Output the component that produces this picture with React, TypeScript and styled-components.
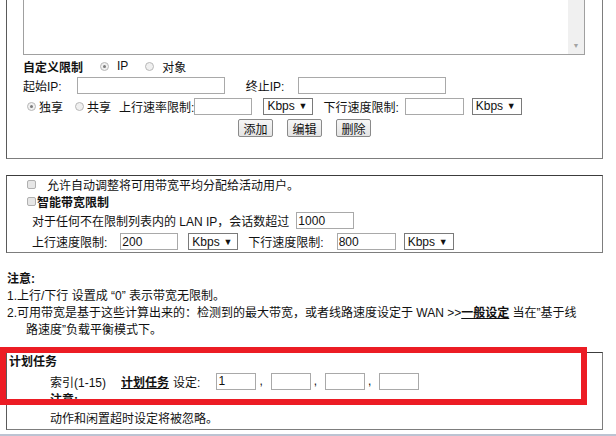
import React, { FC } from "react";
import styled, { createGlobalStyle } from "styled-components";

const GlobalStyle = createGlobalStyle`
  body {
    margin: 0;
    background: #fff;
    color: #111;
    font-family: "Liberation Sans", "Noto Sans CJK SC", sans-serif;
    font-size: 12px;
  }
`;

const Root = styled.div`
  position: relative;
  display: flow-root;
  height: 436px;
  overflow: hidden;
`;

const Page = styled.div`
  padding: 0 13px 0 6px;
`;

const Panel = styled.div<{ $top: number; $pad: string }>`
  margin-top: ${(p) => p.$top}px;
  padding: ${(p) => p.$pad};
  border: 1px solid #7d7d7d;
  border-top-color: #3c3c3c;
  border-left-color: #5a5a5a;
`;

const TextBox = styled.div`
  display: flex;
  box-sizing: border-box;
  width: 562px;
  height: 84px;
  border: 1px solid #a0a0a0;
`;

const TextArea = styled.textarea`
  flex: 1;
  border: none;
  resize: none;
  outline: none;
  margin: 0;
  padding: 2px;
`;

const ScrollTrack = styled.div`
  display: flex;
  flex-direction: column;
  justify-content: flex-end;
  align-items: center;
  width: 16px;
  background: #f0f0f0;
  color: #a3a3a3;
  font-size: 7px;
  line-height: 16px;
`;

const Row = styled.div<{ $h: number; $mt?: number; $indent?: number }>`
  display: flex;
  align-items: center;
  height: ${(p) => p.$h}px;
  margin-top: ${(p) => p.$mt || 0}px;
  padding-left: ${(p) => p.$indent || 0}px;
  white-space: nowrap;
`;

const Bold = styled.span`
  font-weight: bold;
`;

const Gap = styled.span<{ $w: number }>`
  display: inline-block;
  width: ${(p) => p.$w}px;
  flex: none;
`;

const Radio = styled.span<{ $checked?: boolean }>`
  display: inline-flex;
  align-items: center;
  justify-content: center;
  box-sizing: border-box;
  width: 9px;
  height: 9px;
  border-radius: 50%;
  border: 1px solid #b8b8b8;
  background: #f0f0f0;
  flex: none;
  &::after {
    content: "";
    display: ${(p) => (p.$checked ? "block" : "none")};
    width: 3px;
    height: 3px;
    border-radius: 50%;
    background: #7c7c7c;
  }
`;

const Check = styled.span`
  display: inline-block;
  box-sizing: border-box;
  width: 9px;
  height: 9px;
  border: 1px solid #b0b0b0;
  border-radius: 2px;
  background: #e6e6e6;
  flex: none;
`;

const Input = styled.input<{ $w: number }>`
  box-sizing: border-box;
  width: ${(p) => p.$w}px;
  height: 17px;
  border: 1px solid #a9a9a9;
  padding: 0 1px;
  margin: 0;
  font: inherit;
  color: #111;
  flex: none;
`;

const Select = styled.span<{ $w: number }>`
  display: inline-flex;
  align-items: center;
  justify-content: space-between;
  box-sizing: border-box;
  width: ${(p) => p.$w}px;
  height: 17px;
  border: 1px solid #7a7a7a;
  padding: 0 5px 0 3px;
  background: #fff;
  flex: none;
  font-size: 12px;
`;

const Arrow = styled.span`
  font-size: 9px;
`;

const ButtonRow = styled.div`
  display: flex;
  justify-content: center;
  gap: 14px;
  margin-top: 4px;
`;

const Button = styled.button`
  box-sizing: border-box;
  width: 35px;
  height: 18px;
  padding: 0;
  border: 1px solid #8a8a8a;
  border-radius: 2px;
  background: linear-gradient(#f6f6f6, #e4e4e4);
  font: inherit;
  color: #111;
`;

const Notes = styled.div`
  margin-top: 18px;
  padding-left: 1px;
  line-height: 17px;
`;

const Item = styled.div`
  white-space: nowrap;
`;

const Cont = styled.div`
  padding-left: 19px;
`;

const Link = styled.span`
  font-weight: bold;
  text-decoration: underline;
`;

const Line = styled.div<{ $lh: number; $indent?: number }>`
  line-height: ${(p) => p.$lh}px;
  padding-left: ${(p) => p.$indent || 0}px;
  white-space: nowrap;
`;

const Strip = styled.div`
  margin-top: 4px;
  height: 2px;
  background: #bcc3d2;
`;

const Highlight = styled.div`
  position: absolute;
  left: 0;
  top: 347px;
  width: 587px;
  height: 58px;
  box-sizing: border-box;
  border: 6px solid #ec1c24;
`;

const Kbps: FC = () => (
  <Select $w={50}>
    Kbps <Arrow>▼</Arrow>
  </Select>
);

const App: FC = () => (
  <Root>
    <GlobalStyle />
    <Page>
      <Panel $top={-30} $pad="0 16px 21px 16px">
        <TextBox>
          <TextArea readOnly />
          <ScrollTrack>▼</ScrollTrack>
        </TextBox>
        <Row $h={18} $mt={2}>
          <Bold>自定义限制</Bold>
          <Gap $w={17} />
          <Radio $checked />
          <Gap $w={8} />
          IP
          <Gap $w={17} />
          <Radio />
          <Gap $w={8} />
          对象
        </Row>
        <Row $h={18} $mt={1}>
          起始IP:
          <Gap $w={15} />
          <Input $w={148} />
          <Gap $w={21} />
          终止IP:
          <Gap $w={14} />
          <Input $w={148} />
        </Row>
        <Row $h={18} $mt={3} $indent={4}>
          <Radio $checked />
          <Gap $w={3} />
          独享
          <Gap $w={12} />
          <Radio />
          <Gap $w={3} />
          共享
          <Gap $w={8} />
          上行速率限制:
          <Input $w={58} />
          <Gap $w={11} />
          <Kbps />
          <Gap $w={10} />
          下行速度限制:
          <Gap $w={6} />
          <Input $w={59} />
          <Gap $w={8} />
          <Kbps />
        </Row>
        <ButtonRow>
          <Button>添加</Button>
          <Button>编辑</Button>
          <Button>删除</Button>
        </ButtonRow>
      </Panel>

      <Panel $top={16} $pad="0 0 2px 0">
        <Row $h={17} $indent={20}>
          <Check />
          <Gap $w={11} />
          允许自动调整将可用带宽平均分配给活动用户。
        </Row>
        <Row $h={17} $indent={20}>
          <Check />
          <Gap $w={1} />
          <Bold>智能带宽限制</Bold>
        </Row>
        <Row $h={17} $mt={2} $indent={25}>
          对于任何不在限制列表内的 LAN IP，会话数超过
          <Gap $w={7} />
          <Input $w={58} defaultValue="1000" />
        </Row>
        <Row $h={17} $mt={4} $indent={25}>
          上行速度限制:
          <Gap $w={13} />
          <Input $w={58} defaultValue="200" />
          <Gap $w={10} />
          <Kbps />
          <Gap $w={10} />
          下行速度限制:
          <Gap $w={13} />
          <Input $w={59} defaultValue="800" />
          <Gap $w={8} />
          <Kbps />
        </Row>
      </Panel>

      <Notes>
        <Bold>注意:</Bold>
        <Item>1.上行/下行 设置成 “0” 表示带宽无限制。</Item>
        <Item>
          2.可用带宽是基于这些计算出来的：检测到的最大带宽，或者线路速度设定于 WAN &gt;&gt;
          <Link>一般设定</Link> 当在”基于线
        </Item>
        <Cont>路速度”负载平衡模式下。</Cont>
      </Notes>

      <Panel $top={13} $pad="0 0 0 2px">
        <Line $lh={19}>
          <Bold>计划任务</Bold>
        </Line>
        <Row $h={18} $indent={41}>
          索引(1-15)
          <Gap $w={15} />
          <Link>计划任务</Link>
          <Gap $w={4} />
          设定:
          <Gap $w={16} />
          <Input $w={40} defaultValue="1" />
          <Gap $w={3} />,<Gap $w={8} />
          <Input $w={40} />
          <Gap $w={3} />,<Gap $w={8} />
          <Input $w={40} />
          <Gap $w={3} />,<Gap $w={8} />
          <Input $w={40} />
        </Row>
        <Line $lh={20} $indent={41}>
          <Bold>注意:</Bold>
        </Line>
        <Line $lh={19} $indent={41}>
          动作和闲置超时设定将被忽略。
        </Line>
      </Panel>
    </Page>
    <Strip />
    <Highlight />
  </Root>
);

export default App;
